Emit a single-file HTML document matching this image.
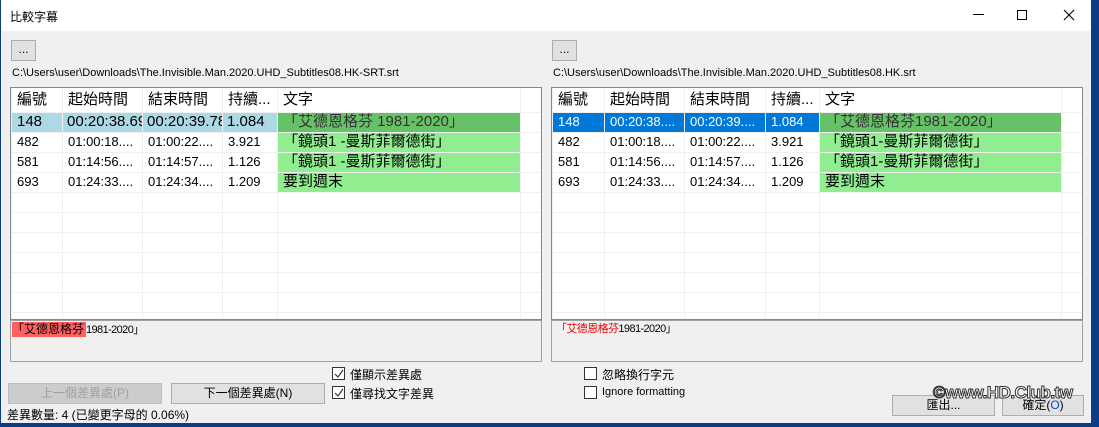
<!DOCTYPE html>
<html><head><meta charset="utf-8"><style>
*{margin:0;padding:0;box-sizing:border-box}
body{width:1099px;height:427px;overflow:hidden;background:#0b3d86;font-family:"Liberation Sans","Noto Sans CJK TC",sans-serif;font-size:12px;color:#000;position:relative}
.win{position:absolute;left:1px;top:0;width:1090px;height:423px;background:#f0f0f0}
.title{position:absolute;left:0;top:0;width:1090px;height:31px;background:#fff}
.a{position:absolute;white-space:nowrap}
.btn{position:absolute;background:#e1e1e1;border:1px solid #adadad;text-align:center;font-size:12px}
.grid{position:absolute;background:#fff;border:1px solid #828790;overflow:hidden}
table{border-collapse:collapse;table-layout:fixed;position:absolute;left:0;top:0}
td{border:1px solid #f0f0f0;height:20px;padding:0 0 0 5px;white-space:nowrap;overflow:hidden;font-size:13px;line-height:18px}
tr.h td{height:24px;font-size:15px;border-top:none;background:#fff}
.g1{background:#66c266!important;color:#333;font-size:15px}
.g2{background:#90ee90!important;font-size:15px}
.box{position:absolute;border:1px solid #a0a0a0;background:#f0f0f0}
.cb{position:absolute;width:13px;height:13px;border:1px solid #333;background:#fff}
</style></head><body>
<div class="win">
<div class="title"></div>
<div class="a" style="left:9px;top:8px;font-size:12px">比較字幕</div>
<div class="a" style="left:972px;top:14px;width:11px;height:1px;background:#000"></div>
<div class="a" style="left:1016px;top:10px;width:10px;height:10px;border:1px solid #000"></div>
<svg class="a" style="left:1062px;top:9px" width="12" height="12"><path d="M1 1L11 11M11 1L1 11" stroke="#000" stroke-width="1.1"/></svg>

<div class="btn" style="left:10px;top:40px;width:25px;height:21px;line-height:17px">...</div>
<div class="btn" style="left:551px;top:40px;width:25px;height:21px;line-height:17px">...</div>
<div class="a" style="left:11px;top:67px;font-size:11px">C:\Users\user\Downloads\The.Invisible.Man.2020.UHD_Subtitles08.HK-SRT.srt</div>
<div class="a" style="left:552px;top:67px;font-size:11px">C:\Users\user\Downloads\The.Invisible.Man.2020.UHD_Subtitles08.HK.srt</div>

<div class="grid" style="left:9px;top:87px;width:532px;height:233px">
<table style="width:530px"><colgroup><col style="width:51px"><col style="width:80px"><col style="width:80px"><col style="width:55px"><col style="width:243px"><col style="width:21px"></colgroup>
<tr class="h"><td>編號</td><td>起始時間</td><td>結束時間</td><td>持續...</td><td>文字</td><td></td></tr>
<tr style="font-size:15px"><td style="background:#add8e6;font-size:15px">148</td><td style="background:#add8e6;font-size:15px;padding-left:4px">00:20:38.69</td><td style="background:#add8e6;font-size:15px;padding-left:4px">00:20:39.78</td><td style="background:#add8e6;font-size:15px;padding-left:4px">1.084</td><td class="g1">「艾德恩格芬 1981-2020」</td><td></td></tr>
<tr><td>482</td><td>01:00:18....</td><td>01:00:22....</td><td>3.921</td><td class="g2">「鏡頭1 -曼斯菲爾德街」</td><td></td></tr>
<tr><td>581</td><td>01:14:56....</td><td>01:14:57....</td><td>1.126</td><td class="g2">「鏡頭1 -曼斯菲爾德街」</td><td></td></tr>
<tr><td>693</td><td>01:24:33....</td><td>01:24:34....</td><td>1.209</td><td class="g2">要到週末</td><td></td></tr>
<tr><td></td><td></td><td></td><td></td><td></td><td></td></tr>
<tr><td></td><td></td><td></td><td></td><td></td><td></td></tr>
<tr><td></td><td></td><td></td><td></td><td></td><td></td></tr>
<tr><td></td><td></td><td></td><td></td><td></td><td></td></tr>
<tr><td></td><td></td><td></td><td></td><td></td><td></td></tr>
<tr><td></td><td></td><td></td><td></td><td></td><td></td></tr>
<tr><td></td><td></td><td></td><td></td><td></td><td></td></tr>
</table></div>

<div class="grid" style="left:550px;top:87px;width:532px;height:233px">
<table style="width:530px"><colgroup><col style="width:52px"><col style="width:80px"><col style="width:81px"><col style="width:54px"><col style="width:242px"><col style="width:21px"></colgroup>
<tr class="h"><td>編號</td><td>起始時間</td><td>結束時間</td><td>持續...</td><td>文字</td><td></td></tr>
<tr><td style="background:#0078d7;color:#fff">148</td><td style="background:#0078d7;color:#fff">00:20:38....</td><td style="background:#0078d7;color:#fff">00:20:39....</td><td style="background:#0078d7;color:#fff">1.084</td><td class="g1">「艾德恩格芬1981-2020」</td><td></td></tr>
<tr><td>482</td><td>01:00:18....</td><td>01:00:22....</td><td>3.921</td><td class="g2">「鏡頭1-曼斯菲爾德街」</td><td></td></tr>
<tr><td>581</td><td>01:14:56....</td><td>01:14:57....</td><td>1.126</td><td class="g2">「鏡頭1-曼斯菲爾德街」</td><td></td></tr>
<tr><td>693</td><td>01:24:33....</td><td>01:24:34....</td><td>1.209</td><td class="g2">要到週末</td><td></td></tr>
<tr><td></td><td></td><td></td><td></td><td></td><td></td></tr>
<tr><td></td><td></td><td></td><td></td><td></td><td></td></tr>
<tr><td></td><td></td><td></td><td></td><td></td><td></td></tr>
<tr><td></td><td></td><td></td><td></td><td></td><td></td></tr>
<tr><td></td><td></td><td></td><td></td><td></td><td></td></tr>
<tr><td></td><td></td><td></td><td></td><td></td><td></td></tr>
<tr><td></td><td></td><td></td><td></td><td></td><td></td></tr>
</table></div>

<div class="box" style="left:9px;top:320px;width:532px;height:42px"></div>
<div class="a" style="left:11px;top:322px;font-size:11px;line-height:15px"><span style="background:#ff5f5f;font-size:12px;display:inline-block;padding-right:2px">「艾德恩格芬</span><span style="letter-spacing:-0.6px">1981-2020」</span></div>
<div class="box" style="left:550px;top:320px;width:532px;height:42px"></div>
<div class="a" style="left:555px;top:322px;font-size:11px;line-height:15px;letter-spacing:-0.6px"><span style="color:#e00">「艾德恩格芬</span>1981-2020」</div>

<div class="cb" style="left:331px;top:367px"></div>
<svg class="a" style="left:333px;top:369px" width="10" height="10"><path d="M1 5L4 8L9 1" stroke="#333" fill="none" stroke-width="1.2"/></svg>
<div class="a" style="left:349px;top:366px">僅顯示差異處</div>
<div class="cb" style="left:331px;top:386px"></div>
<svg class="a" style="left:333px;top:388px" width="10" height="10"><path d="M1 5L4 8L9 1" stroke="#333" fill="none" stroke-width="1.2"/></svg>
<div class="a" style="left:349px;top:385px">僅尋找文字差異</div>
<div class="cb" style="left:583px;top:367px"></div>
<div class="a" style="left:601px;top:366px">忽略換行字元</div>
<div class="cb" style="left:583px;top:386px"></div>
<div class="a" style="left:601px;top:386px;font-size:11px">Ignore formatting</div>

<div class="btn" style="left:7px;top:383px;width:154px;height:21px;line-height:19px;background:#ccc;border-color:#bfbfbf;color:#a0a0a0">上一個差異處(P)</div>
<div class="btn" style="left:170px;top:383px;width:154px;height:21px;line-height:19px">下一個差異處(N)</div>
<div class="a" style="left:6px;top:406px;font-size:12px">差異數量: 4 (已變更字母的 0.06%)</div>

<div class="btn" style="left:891px;top:395px;width:103px;height:21px;line-height:19px">匯出...</div>
<div class="btn" style="left:1001px;top:395px;width:82px;height:21px;line-height:19px">確定(<span style="color:#0050c0">O</span>)</div>
<div class="a" style="left:932px;top:383px;font-size:17px;font-weight:bold;color:#fff;-webkit-text-stroke:1px #333;letter-spacing:-0.5px">©www.HD.Club.tw</div>
</div>
</body></html>
